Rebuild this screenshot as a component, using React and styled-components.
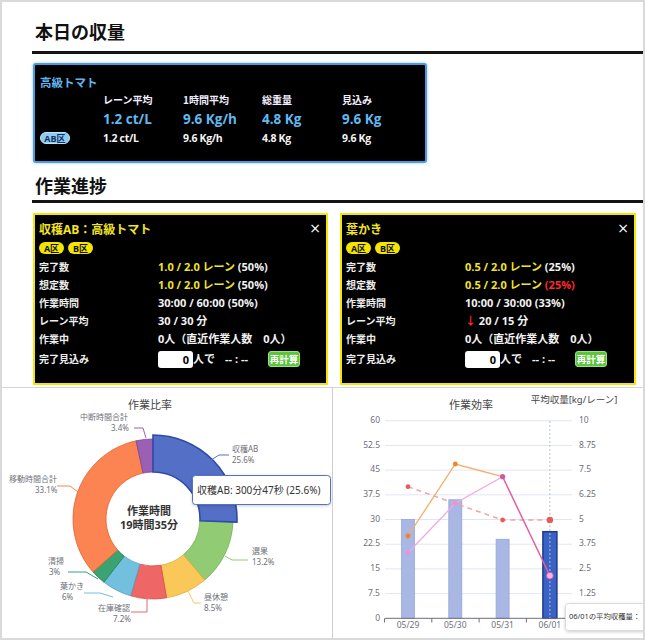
import React from 'react';
import styled, { createGlobalStyle } from 'styled-components';

const GlobalStyle = createGlobalStyle`
  html, body {
    margin: 0;
    padding: 0;
    background: #fff;
  }
  body {
    font-family: "Open Sans", "Noto Sans CJK JP", sans-serif;
  }
`;

const CJK = '"Noto Sans", "Noto Sans CJK JP", sans-serif';

const Page = styled.div`
  width: 645px;
  height: 640px;
  box-sizing: border-box;
  border: 2px solid #d9d9d9;
  display: flex;
  flex-direction: column;
  overflow: hidden;
`;

const Top = styled.div`
  height: 385px;
  box-sizing: border-box;
  padding: 17px 0 0 30px;
  display: flex;
  flex-direction: column;
`;

const Heading = styled.h2`
  margin: ${(p) => p.$top}px 0 0 0;
  padding-left: 3px;
  font: 700 18px/24px "Noto Sans CJK JP", sans-serif;
  color: #111;
`;

const Rule = styled.div`
  margin-top: ${(p) => p.$top}px;
  height: 3px;
  background: #141414;
`;

const SummaryCard = styled.div`
  margin: 9px 0 0 1px;
  width: 394px;
  height: 100px;
  box-sizing: border-box;
  background: #000;
  border: 2px solid #4a9be0;
  border-radius: 3px;
  box-shadow: 0 0 3px rgba(74, 155, 224, 0.6);
  padding: 10px 0 0 5px;
`;

const SummaryName = styled.div`
  height: 14px;
  font: 700 11.5px/14px "Noto Sans CJK JP", sans-serif;
  color: #5fb4ee;
`;

const SummaryGrid = styled.div`
  margin-top: 1px;
  display: grid;
  grid-template-columns: 63px 80px 79px 80px 80px;
  grid-template-rows: 20px 18px 20px;
  align-items: center;
`;

const GridHead = styled.div`
  font: 700 10px/14px "Noto Sans CJK JP", sans-serif;
  color: #f3eeff;
`;

const GridValue = styled.div`
  font-weight: 700;
  font-size: ${(p) => (p.$big ? '13.5px' : '10.5px')};
  line-height: 16px;
  color: ${(p) => (p.$big ? '#62b8f0' : '#f4f4f4')};
  letter-spacing: ${(p) => (p.$big ? '0' : '-0.3px')};
`;

const AreaBadge = styled.span`
  justify-self: start;
  display: inline-flex;
  align-items: center;
  justify-content: center;
  width: 30px;
  height: 12px;
  box-sizing: border-box;
  border-radius: 6px;
  background: #8ccaf2;
  border: 1px solid #c0e4fb;
  color: #14325e;
  font: 700 9px/1 "Open Sans", "Noto Sans CJK JP", sans-serif;
`;

const CardRow = styled.div`
  margin: 10px 0 0 1px;
  display: flex;
  gap: 12px;
`;

const ProgressCard = styled.div`
  width: ${(p) => p.$w}px;
  height: 172px;
  box-sizing: border-box;
  background: #000;
  border: 2px solid #f4e600;
  padding: 8px 5px 0 4px;
  color: #f2f2f2;
`;

const CardHeader = styled.div`
  height: 14px;
  display: flex;
  justify-content: space-between;
  align-items: center;
`;

const CardTitle = styled.div`
  font: 700 12px/14px "Open Sans", "Noto Sans CJK JP", sans-serif;
  color: #f2e424;
`;

const CloseMark = styled.span`
  font: 400 14px/14px "DejaVu Sans", sans-serif;
  color: #fff;
  margin-top: -4px;
`;

const BadgeRow = styled.div`
  margin-top: 5px;
  display: flex;
  gap: 4px;
`;

const ZoneBadge = styled.span`
  display: inline-flex;
  align-items: center;
  justify-content: center;
  width: 25px;
  height: 12px;
  border-radius: 6px;
  background: #f4e600;
  color: #111;
  font: 700 9px/1 "Open Sans", "Noto Sans CJK JP", sans-serif;
`;

const InfoList = styled.div`
  margin-top: 4px;
  display: flex;
  flex-direction: column;
`;

const InfoRow = styled.div`
  display: flex;
  align-items: center;
  height: ${(p) => (p.$tall ? 22 : 18)}px;
`;

const InfoLabel = styled.div`
  width: 119px;
  flex: none;
  font: 700 10px/14px "Noto Sans CJK JP", sans-serif;
  color: #eee;
`;

const InfoValue = styled.div`
  font: 700 11px/14px "Open Sans", "Noto Sans CJK JP", sans-serif;
  color: #f2f2f2;
  white-space: pre;
`;

const EstimateValue = styled(InfoValue)`
  display: flex;
  align-items: center;
`;

const Y = styled.span`
  color: #f2e424;
`;

const R = styled.span`
  color: #ff2a2a;
`;

const CountBox = styled.div`
  width: 35px;
  height: 17px;
  box-sizing: border-box;
  background: #fff;
  border-radius: 3px;
  color: #000;
  text-align: right;
  padding-right: 4px;
  font: 700 11px/17px "Open Sans", sans-serif;
`;

const Dash = styled.span`
  margin-left: 10px;
  width: 43px;
`;

const RecalcButton = styled.button`
  width: 32px;
  height: 16px;
  padding: 0;
  box-sizing: border-box;
  background: #5cc43c;
  border: 1px solid #98e47a;
  border-radius: 3px;
  color: #fff;
  font: 700 9.5px/14px "Noto Sans CJK JP", sans-serif;
  cursor: pointer;
`;

const ChartRow = styled.div`
  height: 251px;
  box-sizing: border-box;
  border-top: 1px solid #d4d4d4;
  display: flex;
`;

const ChartPanel = styled.div`
  width: ${(p) => p.$w}px;
  height: 250px;
  box-sizing: border-box;
  border-left: ${(p) => (p.$divider ? '1px solid #cfcfcf' : 'none')};
  background: #fff;
`;

const ChartSvg = styled.svg`
  display: block;
  font-family: ${CJK};
`;

const slices = [
  { name: '収穫AB', pct: 25.6, color: '#5470c6', edge: '#2f4aa8' },
  { name: '選果', pct: 13.2, color: '#91cc75', edge: '#6cae50' },
  { name: '昼休憩', pct: 8.5, color: '#fac858', edge: '#e2aa34' },
  { name: '在庫確認', pct: 7.2, color: '#ee6666', edge: '#d44a4a' },
  { name: '葉かき', pct: 6, color: '#73c0de', edge: '#4ea2c6' },
  { name: '清掃', pct: 3, color: '#3ba272', edge: '#22855a' },
  { name: '移動時間合計', pct: 33.1, color: '#fc8452', edge: '#e0622e' },
  { name: '中断時間合計', pct: 3.4, color: '#9a60b4', edge: '#7a4296' },
];

const pieLabels = [
  { i: 0, line: [[211, 460], [219, 455], [229, 455]], nx: 232, px: 232, y: 450 },
  { i: 1, line: [[225, 556], [232, 560], [248, 560]], nx: 252, px: 252, y: 552 },
  { i: 2, line: [[188, 591], [194, 603], [201, 603]], nx: 204, px: 204, y: 598 },
  { i: 3, line: [[147, 599], [147, 612], [131, 612]], nx: 98, px: 113, y: 609 },
  { i: 4, line: [[113, 597], [100, 593], [84, 593]], nx: 60, px: 62, y: 587 },
  { i: 5, line: [[98, 579], [86, 572], [68, 572]], nx: 48, px: 49, y: 562 },
  { i: 6, line: [[78, 492], [70, 486], [57, 486]], nx: 9, px: 35, y: 480 },
  { i: 7, line: [[146, 438], [143, 428], [134, 428]], nx: 80, px: 111, y: 418 },
];

const pt = (cx, cy, r, deg) => {
  const a = (deg * Math.PI) / 180;
  return [cx + r * Math.sin(a), cy - r * Math.cos(a)];
};

const arcPath = (cx, cy, R1, r1, a0, a1) => {
  const large = a1 - a0 > 180 ? 1 : 0;
  const [x0, y0] = pt(cx, cy, R1, a0);
  const [x1, y1] = pt(cx, cy, R1, a1);
  const [x2, y2] = pt(cx, cy, r1, a1);
  const [x3, y3] = pt(cx, cy, r1, a0);
  return `M${x0} ${y0} A${R1} ${R1} 0 ${large} 1 ${x1} ${y1} L${x2} ${y2} A${r1} ${r1} 0 ${large} 0 ${x3} ${y3} Z`;
};

const PieChart = () => {
  const cx = 153;
  const cy = 519;
  let acc = 0;
  const arcs = slices.map((s, i) => {
    const a0 = acc * 3.6;
    acc += s.pct;
    const a1 = acc * 3.6;
    const hot = i === 0;
    return (
      <path
        key={s.name}
        d={arcPath(cx, cy, hot ? 84 : 80, 47, a0, a1)}
        fill={s.color}
        stroke={s.edge}
        strokeWidth={hot ? 1.6 : 0.8}
      />
    );
  });

  return (
    <ChartSvg width="330" height="250" viewBox="2 388 330 250">
      <defs>
        <filter id="tipShadow" x="-10%" y="-30%" width="120%" height="160%">
          <feDropShadow dx="0" dy="1" stdDeviation="1.5" floodColor="#000" floodOpacity="0.2" />
        </filter>
      </defs>
      <text x="150" y="406" textAnchor="middle" dominantBaseline="middle" fontSize="11" fill="#464646">
        作業比率
      </text>
      {arcs.slice(1)}
      {arcs[0]}
      {pieLabels.map((l) => {
        const s = slices[l.i];
        return (
          <g key={s.name}>
            <polyline points={l.line.map((p) => p.join(',')).join(' ')} fill="none" stroke={s.color} strokeWidth="1" />
            <text x={l.nx} y={l.y} dominantBaseline="middle" fontSize="8" fill="#6e7079">
              {s.name}
            </text>
            <text x={l.px} y={l.y + 11} dominantBaseline="middle" fontSize="8" fill="#6e7079">
              {`${s.pct}%`}
            </text>
          </g>
        );
      })}
      <text x={cx - 4} y="512" textAnchor="middle" dominantBaseline="middle" fontSize="11" fontWeight="700" fill="#333">
        作業時間
      </text>
      <text x={cx - 4} y="526" textAnchor="middle" dominantBaseline="middle" fontSize="11" fontWeight="700" fill="#333">
        19時間35分
      </text>
      <rect x="192.5" y="475.5" width="138" height="29" rx="3" fill="#fff" stroke="#5470c6" filter="url(#tipShadow)" />
      <text x="197" y="491" dominantBaseline="middle" fontSize="10" fill="#333">
        収穫AB: 300分47秒 (25.6%)
      </text>
    </ChartSvg>
  );
};

const yL = (v) => 618.3 - v * 3.293;
const cxs = [408, 455.3, 502.6, 549.9];
const dates = ['05/29', '05/30', '05/31', '06/01'];
const bars = [30, 36, 24, 26.3];

const BarChart = () => {
  const grid = Array.from({ length: 9 }, (_, i) => i * 7.5);
  const orange = [536, 464, 476.7];
  const pink = [552.7, 503.3, 476.7, 575.7];
  const red = [486.7, 503.5, 520, 520];
  const pts = (ys) => ys.map((y, i) => `${cxs[i]},${y}`).join(' ');

  return (
    <ChartSvg width="310" height="250" viewBox="333 388 310 250">
      <defs>
        <filter id="tipShadow2" x="-10%" y="-30%" width="120%" height="160%">
          <feDropShadow dx="0" dy="1" stdDeviation="1.5" floodColor="#000" floodOpacity="0.2" />
        </filter>
      </defs>
      <text x="471" y="406" textAnchor="middle" dominantBaseline="middle" fontSize="11" fill="#464646">
        作業効率
      </text>
      <text x="574" y="400" textAnchor="middle" dominantBaseline="middle" fontSize="9.5" fill="#464646">
        平均収量[kg/レーン]
      </text>
      {grid.map((v, i) => (
        <g key={v}>
          {i > 0 && <line x1="385" x2="572" y1={yL(v)} y2={yL(v)} stroke="#e0e6f1" strokeWidth="1" />}
          <text x="380" y={yL(v)} textAnchor="end" dominantBaseline="middle" fontSize="8.5" fill="#6e7079">
            {String(v)}
          </text>
          {i > 0 && (
            <text x="579" y={yL(v)} dominantBaseline="middle" fontSize="8.5" fill="#6e7079">
              {String(i * 1.25)}
            </text>
          )}
        </g>
      ))}
      {bars.map((v, i) => {
        const hot = i === 3;
        return (
          <rect
            key={dates[i]}
            x={cxs[i] - (hot ? 7 : 6.5)}
            y={yL(v)}
            width={hot ? 14 : 13}
            height={618.3 - yL(v)}
            fill={hot ? '#3a62c4' : '#a8b7e4'}
            stroke={hot ? '#1f3a8c' : '#93a6dc'}
            strokeWidth={hot ? 1.5 : 0.8}
          />
        );
      })}
      <line x1="385" x2="574" y1="618.3" y2="618.3" stroke="#6e7079" />
      {[384.5, 431.8, 479.1, 526.4, 573.7].map((x) => (
        <line key={x} x1={x} x2={x} y1="618.3" y2="622.5" stroke="#6e7079" />
      ))}
      {dates.map((d, i) => (
        <text key={d} x={cxs[i]} y="626" textAnchor="middle" dominantBaseline="middle" fontSize="8.5" fill="#6e7079">
          {d}
        </text>
      ))}
      <line x1="549.9" x2="549.9" y1="421" y2="618" stroke="#b9bfcc" strokeDasharray="2 2" />
      <polyline points={pts(red)} fill="none" stroke="#f4a2a2" strokeWidth="1.5" strokeDasharray="5 4" />
      <polyline points={pts(orange)} fill="none" stroke="#f5ac6a" strokeWidth="1.3" />
      <polyline points={pts(pink.slice(0, 3))} fill="none" stroke="#f2a8e2" strokeWidth="1.3" />
      <line x1={cxs[2]} y1={pink[2]} x2={cxs[3]} y2={pink[3]} stroke="#e2609e" strokeWidth="1.5" />
      {[0, 2, 3].map((i) => (
        <circle key={`r${i}`} cx={cxs[i]} cy={red[i]} r={i === 3 ? 3.2 : 2.4} fill="#e95a5a" />
      ))}
      {[0, 1].map((i) => (
        <circle key={`o${i}`} cx={cxs[i]} cy={orange[i]} r="2.4" fill="#f28424" />
      ))}
      <circle cx={cxs[0]} cy={pink[0]} r="2.4" fill="#f090d8" />
      <circle cx={cxs[1]} cy={pink[1]} r="2.4" fill="#f090d8" />
      <circle cx={cxs[2]} cy={pink[2]} r="2.6" fill="#d5559f" />
      <circle cx={cxs[3]} cy={pink[3]} r="3.4" fill="#f6b4e4" stroke="#d5559f" strokeWidth="1" />
      <rect x="565.5" y="603.5" width="90" height="27" rx="3" fill="#fff" stroke="#dcdcdc" filter="url(#tipShadow2)" />
      <text x="569" y="617" dominantBaseline="middle" fontSize="7.4" fill="#333">
        06/01の平均収穫量：
      </text>
    </ChartSvg>
  );
};

const ProgressBox = ({ width, title, rows }) => (
  <ProgressCard $w={width}>
    <CardHeader>
      <CardTitle>{title}</CardTitle>
      <CloseMark>×</CloseMark>
    </CardHeader>
    <BadgeRow>
      <ZoneBadge>A区</ZoneBadge>
      <ZoneBadge>B区</ZoneBadge>
    </BadgeRow>
    <InfoList>
      {rows.map(([label, value]) => (
        <InfoRow key={label}>
          <InfoLabel>{label}</InfoLabel>
          <InfoValue>{value}</InfoValue>
        </InfoRow>
      ))}
      <InfoRow $tall>
        <InfoLabel>完了見込み</InfoLabel>
        <EstimateValue>
          <CountBox>0</CountBox>
          人で
          <Dash>-- : --</Dash>
          <RecalcButton type="button">再計算</RecalcButton>
        </EstimateValue>
      </InfoRow>
    </InfoList>
  </ProgressCard>
);

const harvestRows = [
  ['完了数', <><Y>1.0 / 2.0 レーン</Y> (50%)</>],
  ['想定数', <><Y>1.0 / 2.0 レーン</Y> (50%)</>],
  ['作業時間', '30:00 / 60:00 (50%)'],
  ['レーン平均', '30 / 30 分'],
  ['作業中', '0人（直近作業人数　0人）'],
];

const leafRows = [
  ['完了数', <><Y>0.5 / 2.0 レーン</Y> (25%)</>],
  ['想定数', <><Y>0.5 / 2.0 レーン</Y>{' '}<R>(25%)</R></>],
  ['作業時間', '10:00 / 30:00 (33%)'],
  ['レーン平均', <><R>↓</R> 20 / 15 分</>],
  ['作業中', '0人（直近作業人数　0人）'],
];

const App = () => (
  <>
    <GlobalStyle />
    <Page>
      <Top>
        <Heading $top={0}>本日の収量</Heading>
        <Rule $top={8} />
        <SummaryCard>
          <SummaryName>高級トマト</SummaryName>
          <SummaryGrid>
            <span />
            <GridHead>レーン平均</GridHead>
            <GridHead>1時間平均</GridHead>
            <GridHead>総重量</GridHead>
            <GridHead>見込み</GridHead>
            <span />
            <GridValue $big>1.2 ct/L</GridValue>
            <GridValue $big>9.6 Kg/h</GridValue>
            <GridValue $big>4.8 Kg</GridValue>
            <GridValue $big>9.6 Kg</GridValue>
            <AreaBadge>AB区</AreaBadge>
            <GridValue>1.2 ct/L</GridValue>
            <GridValue>9.6 Kg/h</GridValue>
            <GridValue>4.8 Kg</GridValue>
            <GridValue>9.6 Kg</GridValue>
          </SummaryGrid>
        </SummaryCard>
        <Heading $top={10}>作業進捗</Heading>
        <Rule $top={3} />
        <CardRow>
          <ProgressBox width={295} title="収穫AB：高級トマト" rows={harvestRows} />
          <ProgressBox width={296} title="葉かき" rows={leafRows} />
        </CardRow>
      </Top>
      <ChartRow>
        <ChartPanel $w={330}>
          <PieChart />
        </ChartPanel>
        <ChartPanel $w={311} $divider>
          <BarChart />
        </ChartPanel>
      </ChartRow>
    </Page>
  </>
);

export default App;
